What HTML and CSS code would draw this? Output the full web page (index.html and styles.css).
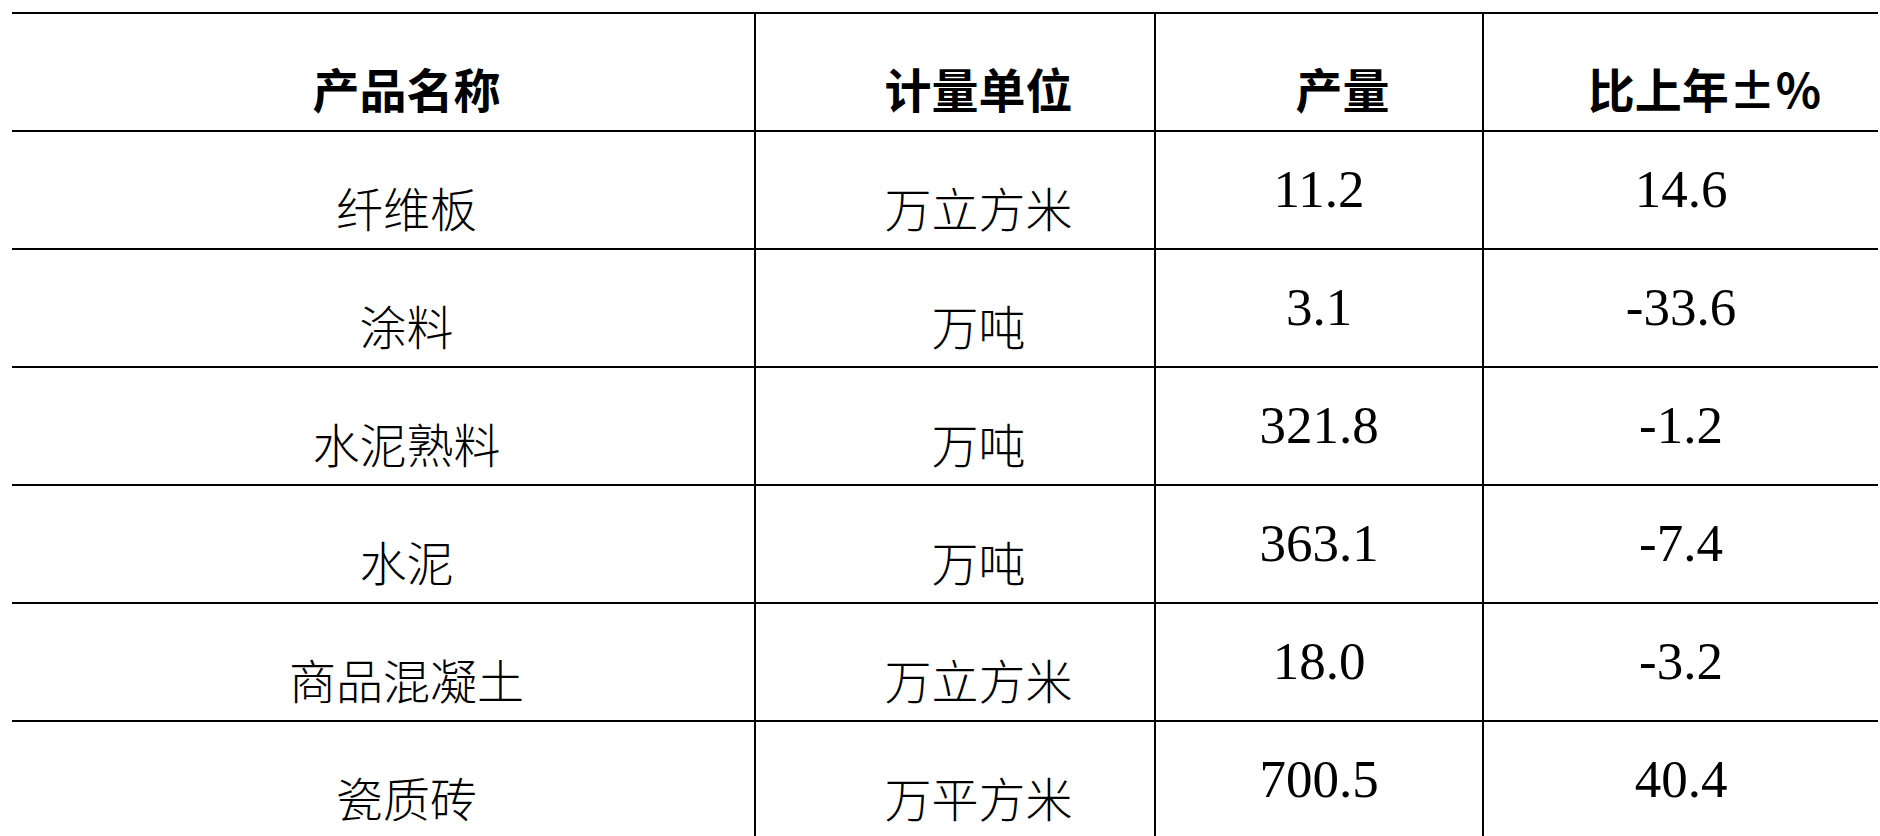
FILE: index.html
```html
<!DOCTYPE html>
<html lang="zh-CN">
<head>
<meta charset="utf-8">
<title>产品产量</title>
<link rel="stylesheet" href="styles.css">
</head>
<body>
<div class="sheet">
  <div class="row head">
    <div class="cell cjk">产品名称</div>
    <div class="cell cjk">计量单位</div>
    <div class="cell cjk">产量</div>
    <div class="cell cjk">比上年±%</div>
  </div>
  <div class="row">
    <div class="cell cjk">纤维板</div>
    <div class="cell cjk">万立方米</div>
    <div class="cell num">11.2</div>
    <div class="cell num">14.6</div>
  </div>
  <div class="row">
    <div class="cell cjk">涂料</div>
    <div class="cell cjk">万吨</div>
    <div class="cell num">3.1</div>
    <div class="cell num">-33.6</div>
  </div>
  <div class="row">
    <div class="cell cjk">水泥熟料</div>
    <div class="cell cjk">万吨</div>
    <div class="cell num">321.8</div>
    <div class="cell num">-1.2</div>
  </div>
  <div class="row">
    <div class="cell cjk">水泥</div>
    <div class="cell cjk">万吨</div>
    <div class="cell num">363.1</div>
    <div class="cell num">-7.4</div>
  </div>
  <div class="row">
    <div class="cell cjk">商品混凝土</div>
    <div class="cell cjk">万立方米</div>
    <div class="cell num">18.0</div>
    <div class="cell num">-3.2</div>
  </div>
  <div class="row">
    <div class="cell cjk">瓷质砖</div>
    <div class="cell cjk">万平方米</div>
    <div class="cell num">700.5</div>
    <div class="cell num">40.4</div>
  </div>
</div>
</body>
</html>
```

FILE: styles.css
```css
html, body {
  margin: 0;
  padding: 0;
  background: #ffffff;
  color: #000000;
}

body {
  padding: 12px 2px 0 12px;
  overflow: hidden;
}

.sheet {
  width: 1866px;
  border-top: 2px solid #000;
}

.row {
  display: grid;
  grid-template-columns: 742px 400px 328px 396px;
  height: 118px;
  box-sizing: border-box;
  border-bottom: 2px solid #000;
}

.cell {
  box-sizing: border-box;
  text-align: center;
  white-space: nowrap;
}

.cell + .cell {
  border-left: 2px solid #000;
}

.cjk {
  font-family: "Noto Sans CJK SC", "Noto Sans", sans-serif;
  font-size: 47px;
  font-weight: 300;
  line-height: 47px;
  text-indent: 1em;
  padding-top: 51px;
}

.head .cjk {
  font-weight: 700;
  padding-top: 50px;
}

.num {
  font-family: "Liberation Serif", "Times New Roman", serif;
  font-size: 53px;
  line-height: 53px;
  padding-top: 31px;
}
```
